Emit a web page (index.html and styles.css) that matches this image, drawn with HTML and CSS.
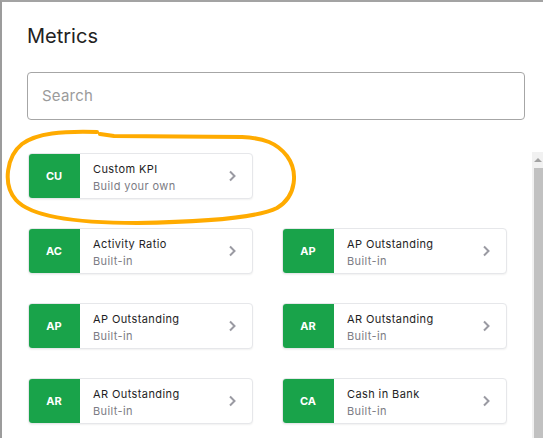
FILE: index.html
```html
<!DOCTYPE html>
<html>
<head>
<meta charset="utf-8">
<link rel="stylesheet" href="styles.css">
</head>
<body>
<div class="panel">
  <h1 class="title">Metrics</h1>
  <div class="search">Search</div>
  <div class="body">
    <div class="list">
      <div class="card"><div class="badge">CU</div><div class="txt"><div class="name">Custom KPI</div><div class="sub">Build your own</div></div><svg class="chev" viewBox="0 0 10 14"><path d="M3 2.5 L7.5 7 L3 11.5" fill="none" stroke="#9a9aa2" stroke-width="2"/></svg></div>
      <div></div>
      <div class="card"><div class="badge">AC</div><div class="txt"><div class="name">Activity Ratio</div><div class="sub">Built-in</div></div><svg class="chev" viewBox="0 0 10 14"><path d="M3 2.5 L7.5 7 L3 11.5" fill="none" stroke="#9a9aa2" stroke-width="2"/></svg></div>
      <div class="card"><div class="badge">AP</div><div class="txt"><div class="name">AP Outstanding</div><div class="sub">Built-in</div></div><svg class="chev" viewBox="0 0 10 14"><path d="M3 2.5 L7.5 7 L3 11.5" fill="none" stroke="#9a9aa2" stroke-width="2"/></svg></div>
      <div class="card"><div class="badge">AP</div><div class="txt"><div class="name">AP Outstanding</div><div class="sub">Built-in</div></div><svg class="chev" viewBox="0 0 10 14"><path d="M3 2.5 L7.5 7 L3 11.5" fill="none" stroke="#9a9aa2" stroke-width="2"/></svg></div>
      <div class="card"><div class="badge">AR</div><div class="txt"><div class="name">AR Outstanding</div><div class="sub">Built-in</div></div><svg class="chev" viewBox="0 0 10 14"><path d="M3 2.5 L7.5 7 L3 11.5" fill="none" stroke="#9a9aa2" stroke-width="2"/></svg></div>
      <div class="card"><div class="badge">AR</div><div class="txt"><div class="name">AR Outstanding</div><div class="sub">Built-in</div></div><svg class="chev" viewBox="0 0 10 14"><path d="M3 2.5 L7.5 7 L3 11.5" fill="none" stroke="#9a9aa2" stroke-width="2"/></svg></div>
      <div class="card"><div class="badge">CA</div><div class="txt"><div class="name">Cash in Bank</div><div class="sub">Built-in</div></div><svg class="chev" viewBox="0 0 10 14"><path d="M3 2.5 L7.5 7 L3 11.5" fill="none" stroke="#9a9aa2" stroke-width="2"/></svg></div>
    </div>
    <div class="scrollbar">
      <div class="arrow"></div>
      <div class="thumb"></div>
    </div>
  </div>
  <svg class="circle" viewBox="0 0 300 100" width="300" height="100">
    <path d="M95 6 C60 5 35 7 20 18 C5 30 0 58 14 74 C30 92 80 97 135 97 C200 96 255 92 275 82 C295 70 296 45 285 30 C275 17 262 12 240 11 L112 10 L98 8" fill="none" stroke="#ffab00" stroke-width="4" stroke-linecap="round" stroke-linejoin="round"/>
  </svg>
  <div class="mark"></div>
</div>
</body>
</html>
```
FILE: styles.css
```css
html, body {
  margin: 0;
  padding: 0;
  background: #fff;
}
.panel {
  position: relative;
  width: 541px;
  height: 436px;
  border-top: 2px solid #a3a3a3;
  border-left: 2px solid #9c9c9c;
  overflow: hidden;
  font-family: Inter, "Noto Sans", sans-serif;
}
.title {
  margin: 0;
  padding: 22px 0 0 25px;
  font-size: 20px;
  line-height: 24px;
  font-weight: 400;
  color: #222;
}
.search {
  margin: 24px 0 0 25px;
  width: 482px;
  height: 46px;
  border: 1px solid #a6a6a6;
  border-radius: 4px;
  padding-left: 14px;
  box-sizing: content-box;
  font-size: 15px;
  line-height: 46px;
  color: #9b9b9b;
  letter-spacing: 0.2px;
}
.body {
  display: flex;
  margin-top: 32px;
  height: 300px;
}
.list {
  width: 505px;
  padding: 1px 0 0 26px;
  display: grid;
  grid-template-columns: 225px 225px;
  grid-auto-rows: 46px;
  column-gap: 29px;
  row-gap: 29px;
  align-content: start;
}
.card {
  display: flex;
  align-items: center;
  border: 1px solid #e6e7ea;
  border-radius: 4px;
  box-shadow: 0 1px 2px rgba(0,0,0,0.06);
  overflow: hidden;
  box-sizing: border-box;
  background: #fff;
}
.badge {
  width: 52px;
  height: 100%;
  background: #19a34a;
  color: #fff;
  font-weight: 700;
  font-size: 11px;
  display: flex;
  align-items: center;
  justify-content: center;
  flex-shrink: 0;
  margin: -1px 0 -1px -1px;
  padding: 1px 0;
}
.txt {
  flex: 1;
  padding: 3px 0 0 13px;
  font-size: 11px;
  letter-spacing: 0.4px;
}
.name {
  color: #1e1e24;
  line-height: 15px;
}
.sub {
  color: #7c7c84;
  line-height: 15px;
  margin-top: 2px;
}
.chev {
  width: 10px;
  height: 14px;
  margin-right: 15px;
}
.scrollbar {
  width: 11px;
  margin-left: 0;
  background: #f1f1f1;
  display: flex;
  flex-direction: column;
  align-items: flex-end;
}
.arrow {
  width: 0;
  height: 0;
  border-left: 4px solid transparent;
  border-right: 4px solid transparent;
  border-bottom: 4px solid #a3a3a3;
  margin: 6px 1px 6px 0;
}
.thumb {
  width: 9px;
  flex: 1;
  background: #c1c1c1;
}
.circle {
  position: absolute;
  left: 0;
  top: 124px;
}
.mark {
  position: absolute;
  left: -2px;
  top: 420px;
  width: 2px;
  height: 3px;
  background: #3a6a9a;
}
```
